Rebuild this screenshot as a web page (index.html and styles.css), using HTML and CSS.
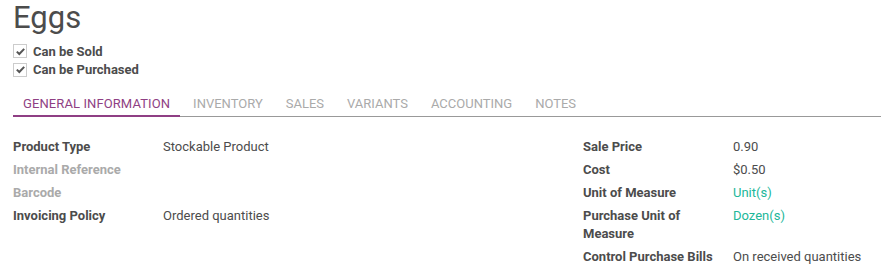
FILE: index.html
```html
<!DOCTYPE html>
<html>
<head>
<meta charset="utf-8">
<link rel="stylesheet" href="styles.css">
</head>
<body>
<div class="sheet">
  <h1 class="title">Eggs</h1>
  <div class="checks">
    <label class="check"><span class="box"><svg width="11" height="11" viewBox="0 0 11 11"><path d="M1.8 5.6 L4.3 8 L9.2 2.9" fill="none" stroke="#555" stroke-width="2"/></svg></span><span>Can be Sold</span></label>
    <label class="check"><span class="box"><svg width="11" height="11" viewBox="0 0 11 11"><path d="M1.8 5.6 L4.3 8 L9.2 2.9" fill="none" stroke="#555" stroke-width="2"/></svg></span><span>Can be Purchased</span></label>
  </div>
  <div class="tabs">
    <div class="tab active">General Information</div>
    <div class="tab">Inventory</div>
    <div class="tab">Sales</div>
    <div class="tab">Variants</div>
    <div class="tab">Accounting</div>
    <div class="tab">Notes</div>
  </div>
  <div class="groups">
    <div class="group">
      <div class="lbl">Product Type</div><div class="val">Stockable Product</div>
      <div class="lbl muted">Internal Reference</div><div class="val"></div>
      <div class="lbl muted">Barcode</div><div class="val"></div>
      <div class="lbl">Invoicing Policy</div><div class="val">Ordered quantities</div>
    </div>
    <div class="group">
      <div class="lbl">Sale Price</div><div class="val">0.90</div>
      <div class="lbl">Cost</div><div class="val">$0.50</div>
      <div class="lbl">Unit of Measure</div><div class="val link">Unit(s)</div>
      <div class="lbl">Purchase Unit of Measure</div><div class="val link">Dozen(s)</div>
      <div class="lbl">Control Purchase Bills</div><div class="val">On received quantities</div>
    </div>
  </div>
</div>
</body>
</html>
```

FILE: styles.css
```css
html, body {
  margin: 0;
  padding: 0;
  background: #fff;
}
body {
  font-family: Roboto, "Liberation Sans", sans-serif;
  font-size: 13px;
  color: #4c4c4c;
}
.sheet {
  padding: 0 0 0 13px;
}
.title {
  margin: 0;
  font-size: 31px;
  font-weight: 400;
  line-height: 36px;
  color: #4c4c4c;
}
.checks {
  margin-top: 5px;
  display: flex;
  flex-direction: column;
}
.check {
  display: flex;
  align-items: center;
  gap: 6px;
  height: 19px;
  font-weight: 700;
  color: #4c4c4c;
}
.check:first-child {
  padding-top: 1px;
  height: 18px;
}
.box {
  border: 1px solid #ccc;
  display: flex;
  align-items: center;
  justify-content: center;
  box-sizing: border-box;
  width: 14px;
  height: 14px;
}
.tabs {
  display: flex;
  gap: 3px;
  margin-top: 8px;
  border-bottom: 1px solid #999;
}
.tab {
  text-transform: uppercase;
  padding: 9px 10px 5px 10px;
  color: #aaa;
  line-height: 15px;
  font-size: 13px;
}
.tab.active {
  color: #8f3f84;
  letter-spacing: 0.1px;
  border-bottom: 2px solid #8f3f84;
  margin-bottom: -1px;
  padding-bottom: 4px;
}
.groups {
  display: flex;
  margin-top: 21px;
}
.group {
  width: 570px;
  display: grid;
  grid-template-columns: 150px 1fr;
  align-content: start;
  row-gap: 5px;
  line-height: 18px;
}
.group + .group {
  width: auto;
  flex: 1;
}
.lbl {
  font-weight: 700;
  padding-right: 10px;
  color: #4c4c4c;
}
.lbl.muted {
  color: #aaa;
}
.val {
  color: #4c4c4c;
}
.val.link {
  color: #21b799;
}
```
